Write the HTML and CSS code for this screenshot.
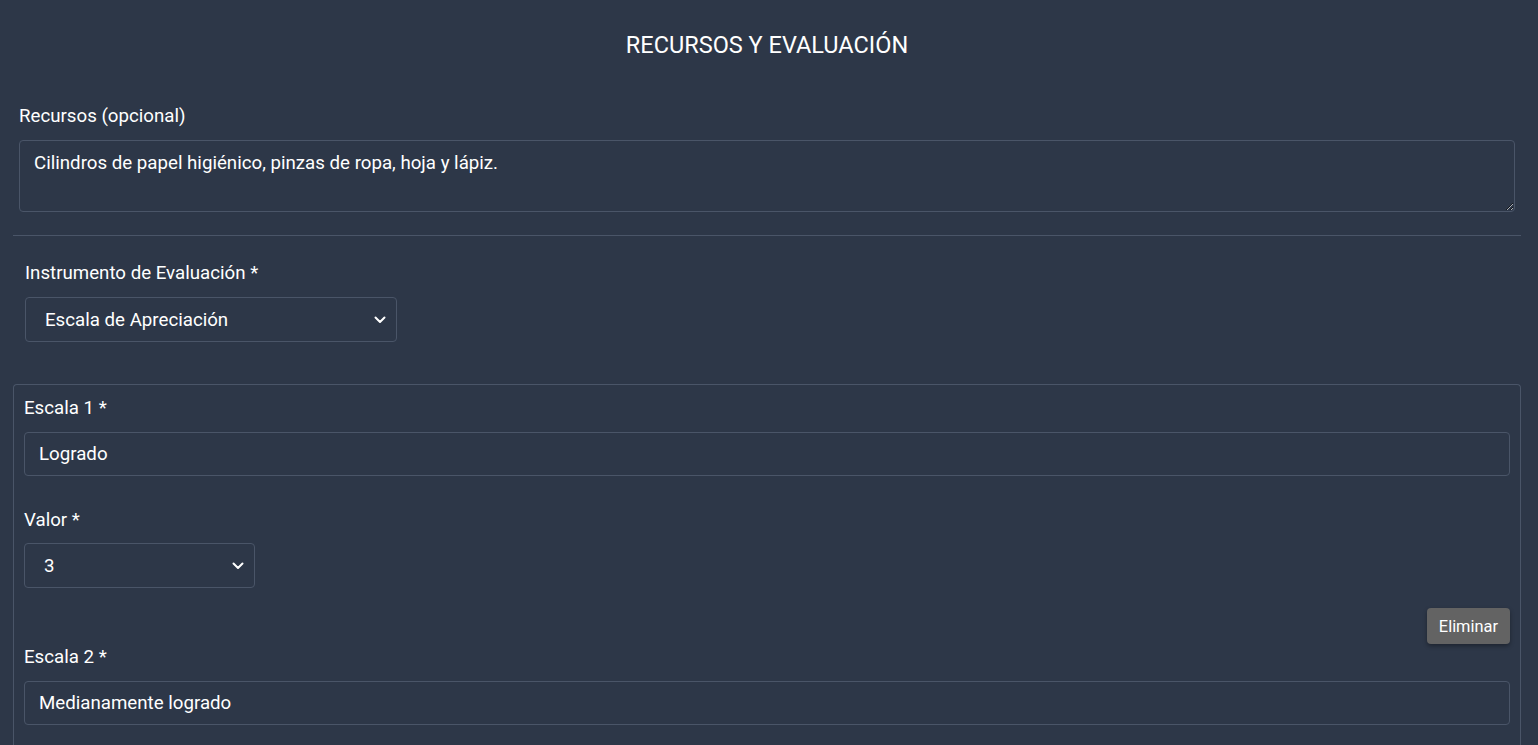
FILE: index.html
```html
<!DOCTYPE html>
<html lang="es">
<head>
<meta charset="utf-8">
<title>Recursos y Evaluación</title>
<link rel="stylesheet" href="styles.css">
</head>
<body>
<main class="page">
  <h2 class="title">RECURSOS Y EVALUACIÓN</h2>

  <div class="field field-resources">
    <label class="label" for="recursos">Recursos (opcional)</label>
    <textarea id="recursos" class="textarea">Cilindros de papel higiénico, pinzas de ropa, hoja y lápiz.</textarea>
  </div>

  <hr class="divider">

  <div class="field field-instrument">
    <label class="label">Instrumento de Evaluación *</label>
    <div class="select select-instrument">
      <span>Escala de Apreciación</span>
      <svg class="chev" viewBox="0 0 12 8" width="12" height="8"><path d="M1.5 1.5 L6 6 L10.5 1.5" fill="none" stroke="#fff" stroke-width="2" stroke-linecap="round" stroke-linejoin="round"/></svg>
    </div>
  </div>

  <section class="card">
    <div class="scale">
      <label class="label">Escala 1 *</label>
      <div class="input">Logrado</div>
      <label class="label label-valor">Valor *</label>
      <div class="select select-valor">
        <span>3</span>
        <svg class="chev" viewBox="0 0 12 8" width="12" height="8"><path d="M1.5 1.5 L6 6 L10.5 1.5" fill="none" stroke="#fff" stroke-width="2" stroke-linecap="round" stroke-linejoin="round"/></svg>
      </div>
      <div class="actions"><button class="btn-delete">Eliminar</button></div>
    </div>
    <div class="scale">
      <label class="label">Escala 2 *</label>
      <div class="input">Medianamente logrado</div>
    </div>
  </section>
</main>
</body>
</html>
```
FILE: styles.css
```css
* { box-sizing: border-box; }
html, body {
  margin: 0;
  padding: 0;
  background: #2d3748;
  color: #ffffff;
  font-family: Roboto, "Liberation Sans", Arial, sans-serif;
  overflow: hidden;
}
.page {
  padding: 0 17px 0 13px;
}
.title {
  margin: 0;
  padding-top: 33px;
  height: 104px;
  font-size: 23.5px;
  line-height: 24px;
  font-weight: 400;
  text-align: center;
}
.label {
  display: block;
  font-size: 18.7px;
  line-height: 24px;
  margin-bottom: 12px;
}
.field-resources {
  padding: 0 6px;
}
.textarea {
  display: block;
  width: 100%;
  height: 72px;
  padding: 10px 14px;
  margin: 0;
  background: #2d3748;
  color: #fff;
  border: 1px solid #4a5568;
  border-radius: 4px;
  font-family: inherit;
  font-size: 18.7px;
  line-height: 24px;
  resize: vertical;
  color-scheme: dark;
}
.divider {
  border: 0;
  border-top: 1px solid #4a5568;
  margin: 23px 0 25px;
  height: 0;
}
.field-instrument {
  padding: 0 12px;
}
.select {
  display: flex;
  align-items: center;
  justify-content: space-between;
  height: 45px;
  border: 1px solid #4a5568;
  border-radius: 4px;
  padding: 0 10px 0 19px;
  font-size: 18.7px;
}
.select-instrument { width: 372px; }
.select-valor { width: 231px; }
.chev { display: block; }
.card {
  margin-top: 42px;
  border: 1px solid #4a5568;
  border-bottom: 0;
  border-radius: 4px 4px 0 0;
  padding: 11px 10px 40px;
}
.input {
  height: 44px;
  border: 1px solid #4a5568;
  border-radius: 4px;
  padding: 9px 14px;
  font-size: 18.7px;
  line-height: 24px;
}
.label-valor {
  margin-top: 32px;
  margin-bottom: 11px;
}
.actions {
  display: flex;
  justify-content: flex-end;
  margin-top: 20px;
  margin-bottom: 1px;
}
.btn-delete {
  height: 36px;
  padding: 0 12px;
  background: #636363;
  color: #fff;
  border: 0;
  border-radius: 4px;
  font-family: inherit;
  font-size: 16.4px;
  box-shadow: 0 2px 4px rgba(0,0,0,0.35);
}
```
